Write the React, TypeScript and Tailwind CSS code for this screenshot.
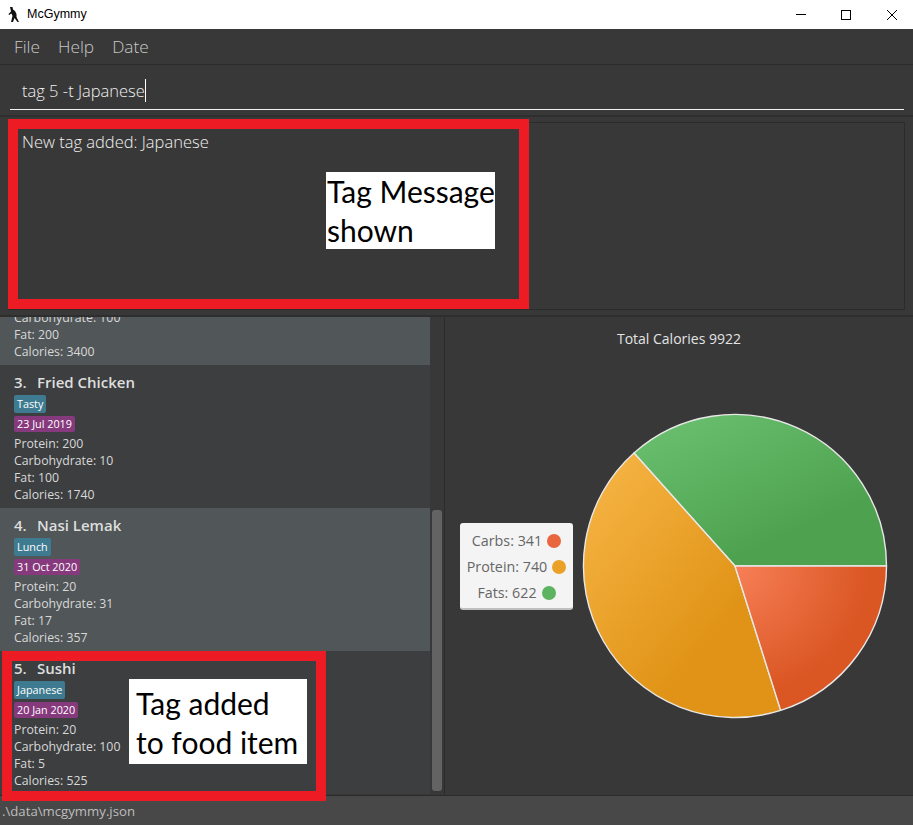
const font = "[font-family:'Open_Sans','Noto_Sans',sans-serif]";

interface Food {
  index: number;
  name: string;
  tag: string;
  date: string;
  protein: number;
  carbs: number;
  fat: number;
  calories: number;
}

const foods: Food[] = [
  { index: 2, name: "Chicken Rice", tag: "Lunch", date: "12 Feb 2020", protein: 200, carbs: 100, fat: 200, calories: 3400 },
  { index: 3, name: "Fried Chicken", tag: "Tasty", date: "23 Jul 2019", protein: 200, carbs: 10, fat: 100, calories: 1740 },
  { index: 4, name: "Nasi Lemak", tag: "Lunch", date: "31 Oct 2020", protein: 20, carbs: 31, fat: 17, calories: 357 },
  { index: 5, name: "Sushi", tag: "Japanese", date: "20 Jan 2020", protein: 20, carbs: 100, fat: 5, calories: 525 },
];

function FoodRow({ food }: { food: Food }) {
  return (
    <div className={`h-[143px] shrink-0 pl-[14px] pt-[6px] text-[12.3px] leading-[17px] text-[#d8d8d8] ${food.index % 2 === 0 ? "bg-[#515658]" : "bg-[#3c3e40]"}`}>
      <div className="flex h-[22px] items-center text-[15px] font-semibold text-[#dedede]">
        <span className="w-[23px]">{food.index}.</span>
        <span>{food.name}</span>
      </div>
      <div className="mt-[2px] flex">
        <span className="h-[18px] rounded-[2px] bg-[#3e7b91] px-[3px] text-[10.8px] leading-[18px] text-white">{food.tag}</span>
      </div>
      <div className="mt-[3px] flex">
        <span className="h-[16px] rounded-[2px] bg-[#86397c] px-[3px] text-[10.8px] leading-[16px] text-white">{food.date}</span>
      </div>
      <div className="mt-[3px]">Protein: {food.protein}</div>
      <div>Carbohydrate: {food.carbs}</div>
      <div>Fat: {food.fat}</div>
      <div>Calories: {food.calories}</div>
    </div>
  );
}

function PieChart() {
  return (
    <svg width="310" height="310" viewBox="0 0 310 310">
      <defs>
        <linearGradient id="green" x1="0" y1="0" x2="0.75" y2="1">
          <stop offset="0" stopColor="#6cc272" />
          <stop offset="0.8" stopColor="#4ea24f" />
        </linearGradient>
        <linearGradient id="orange" x1="0" y1="0" x2="0.8" y2="0.9">
          <stop offset="0" stopColor="#f8b748" />
          <stop offset="0.8" stopColor="#e09316" />
        </linearGradient>
        <radialGradient id="red" cx="0" cy="0" r="1">
          <stop offset="0" stopColor="#f77f57" />
          <stop offset="0.9" stopColor="#da5623" />
        </radialGradient>
      </defs>
      <g stroke="#e8e8e8" strokeWidth="1.4" strokeLinejoin="round">
        <path d="M155 155 L306.5 155 A151.5 151.5 0 0 0 54 42 Z" fill="url(#green)" />
        <path d="M155 155 L54 42 A151.5 151.5 0 0 0 200.7 299.4 Z" fill="url(#orange)" />
        <path d="M155 155 L200.7 299.4 A151.5 151.5 0 0 0 306.5 155 Z" fill="url(#red)" />
      </g>
    </svg>
  );
}

function LegendRow({ label, color }: { label: string; color: string }) {
  return (
    <div className="flex h-[26px] items-center justify-center gap-[5px]">
      <span>{label}</span>
      <span className={`h-[14px] w-[14px] rounded-full ${color}`} />
    </div>
  );
}

export default function App() {
  return (
    <div className={`relative flex h-[825px] w-[913px] flex-col overflow-hidden bg-[#383838] ${font}`}>
      {/* title bar */}
      <div className="flex h-[29px] shrink-0 items-center bg-white text-[12.5px] text-black">
        <svg className="ml-[7px] mr-[6px]" width="14" height="17" viewBox="0 0 14 17">
          <path d="M3 1 L5.5 1 L6 3.5 L8 5 L9.5 8 L9.5 11 L12 16 L10.5 16 L7.5 12 L6 16 L4 16 L5.5 10 L4.5 7.5 L2 9 L1.5 8 L4 5.5 Z" fill="#111" />
        </svg>
        <span className="[font-family:'Liberation_Sans',sans-serif]">McGymmy</span>
        <div className="ml-auto flex items-center">
          <div className="mr-[35px] h-[1px] w-[10px] bg-black" />
          <div className="mr-[36px] h-[10px] w-[10px] border border-black" />
          <svg className="mr-[16px]" width="10" height="10" viewBox="0 0 10 10" stroke="#000" strokeWidth="1">
            <path d="M0 0 L10 10 M10 0 L0 10" />
          </svg>
        </div>
      </div>

      {/* menu */}
      <div className="flex h-[36px] shrink-0 items-center gap-[18px] border-b border-[#2b2b2b] pl-[14px] text-[17.3px] font-light text-[#c8c8c8]">
        <span>File</span>
        <span>Help</span>
        <span>Date</span>
      </div>

      {/* command box */}
      <div className="h-[50px] shrink-0 pl-[10px] pr-[9px] pt-[14px]">
        <div className="h-[31px] border-b border-[#f2f2f2] pl-[12px] text-[16.5px] font-light leading-[23px] text-[#f0f0f0]">
          <span className="border-r border-white">tag 5 -t Japanese</span>
        </div>
      </div>

      {/* result */}
      <div className="h-[202px] shrink-0 border-y-[2px] border-[#2e2e2e] px-[8px] pt-[5px]">
        <div className="h-[188px] border border-[#2b2b2b] pl-[13px] pt-[8px] text-[16.5px] font-light leading-[22px] text-[#f0f0f0]">
          New tag added: Japanese
        </div>
      </div>

      {/* list and chart */}
      <div className="flex min-h-0 flex-1">
        <div className="flex w-[430px] flex-col justify-end overflow-hidden pb-[1px]">
          {foods.map((food) => (
            <FoodRow key={food.index} food={food} />
          ))}
        </div>
        <div className="flex w-[15px] flex-col justify-end border-r border-[#2b2b2b] pb-[4px] pl-[2px]">
          <div className="h-[281px] w-[10px] rounded-[3px] bg-[#636363]" />
        </div>
        <div className="flex flex-1 flex-col">
          <div className="mt-[11px] text-center text-[14px] font-medium text-[#e4e4e4]">Total Calories 9922</div>
          <div className="flex flex-1 items-center pb-[13px] pl-[15px]">
            <div className="mt-[2px] h-[87px] w-[113px] rounded-[3px] border-b-2 border-[#c0c0c0] bg-[#f4f4f4] pt-[5px] text-[14.3px] text-[#666666]">
              <LegendRow label="Carbs: 341" color="bg-[#e8673f]" />
              <LegendRow label="Protein: 740" color="bg-[#eba028]" />
              <LegendRow label="Fats: 622" color="bg-[#5cb460]" />
            </div>
            <div className="ml-[7px]">
              <PieChart />
            </div>
          </div>
        </div>
      </div>

      {/* status */}
      <div className="h-[30px] shrink-0 border-t border-[#2b2b2b] bg-[#484848] pl-[2px] text-[13.2px] leading-[30px] text-[#bdbdbd]">.\data\mcgymmy.json</div>

      {/* annotations */}
      <div className="absolute left-[8px] top-[119px] h-[190px] w-[521px] border-[10px] border-[#ed1c24]" />
      <div className="absolute left-[326px] top-[172px] h-[77px] w-[169px] bg-white pl-[1px] text-[30px] leading-[39px] text-black [font-family:'Lato',sans-serif]">
        Tag Message shown
      </div>
      <div className="absolute left-[2px] top-[651px] h-[150px] w-[324px] border-[10px] border-[#ed1c24]" />
      <div className="absolute left-[129px] top-[679px] h-[85px] w-[178px] bg-white pl-[7px] pt-[5px] text-[30px] leading-[39px] text-black [font-family:'Lato',sans-serif]">
        Tag added
        <br />
        to food item
      </div>
    </div>
  );
}
